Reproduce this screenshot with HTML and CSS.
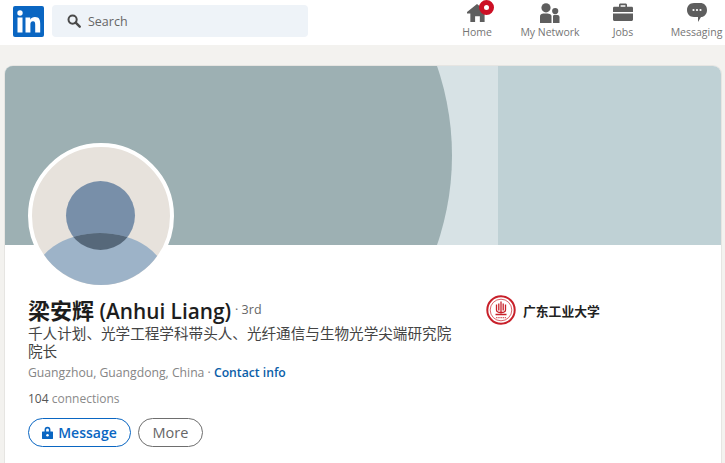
FILE: index.html
```html
<!DOCTYPE html>
<html lang="zh">
<head>
<meta charset="utf-8">
<title>梁安辉 (Anhui Liang)</title>
<link rel="stylesheet" href="styles.css">
</head>
<body>
<header class="nav">
  <svg class="logo" viewBox="0 0 31 31" width="31" height="31">
    <rect width="31" height="31" rx="2" fill="#0a66c2"/>
    <circle cx="7" cy="7" r="2.7" fill="#fff"/>
    <rect x="4.5" y="11.5" width="5" height="15" fill="#fff"/>
    <path d="M12.5 11.5h4.7v2.2c.8-1.4 2.5-2.6 4.8-2.6 4.4 0 5.2 2.9 5.2 6.6v8.8h-5v-7.8c0-1.9-.2-3.5-2.2-3.5-2 0-2.6 1.5-2.6 3.400v7.900h-4.900z" fill="#fff"/>
  </svg>
  <div class="search">
    <svg class="search-icon" viewBox="0 0 14 14" width="14" height="14">
      <circle cx="5.6" cy="5.6" r="4.1" fill="none" stroke="#4a4a4a" stroke-width="2"/>
      <path d="M8.7 8.7l4 4" stroke="#4a4a4a" stroke-width="2.4" stroke-linecap="round"/>
    </svg>
    <span>Search</span>
  </div>
  <nav class="menu">
    <div class="item item-home">
      <span class="icon-wrap">
        <svg viewBox="0 0 21 20" width="20" height="19">
          <path d="M0 9.500L10.500 1 21 9.500V11h-2.500v9h-5v-6h-5v6h-5v-9H0z" fill="#5e5e5e"/>
        </svg>
        <span class="badge"></span>
      </span>
      <span class="label">Home</span>
    </div>
    <div class="item item-net">
      <span class="icon-wrap">
        <svg viewBox="0 0 20 20" width="20" height="20">
          <circle cx="6" cy="4.800" r="4.600" fill="#5e5e5e"/>
          <path d="M0 20v-6.500C0 11 1.800 10.500 6 10.500s5.500 1 5.500 3V20z" fill="#5e5e5e"/>
          <circle cx="15.200" cy="8" r="3.100" fill="#5e5e5e"/>
          <path d="M13 20v-7c0-.6.800-1.200 2.500-1.200 2.700 0 4 .7 4 2.500V20z" fill="#5e5e5e"/>
        </svg>
      </span>
      <span class="label">My Network</span>
    </div>
    <div class="item item-jobs">
      <span class="icon-wrap">
        <svg viewBox="0 0 20 18" width="20" height="18">
          <path d="M6 4V2c0-1 .7-1.500 1.500-1.500h5c.8 0 1.500.5 1.500 1.500v2h-1.600V2.300H7.600V4z" fill="#5e5e5e"/>
          <path d="M0 5.200C0 4.300.7 3.800 1.500 3.800h17c.8 0 1.500.5 1.500 1.400V9H0zM0 10.500h20v6c0 .9-.7 1.500-1.500 1.500h-17C.7 18 0 17.400 0 16.500z" fill="#5e5e5e"/>
        </svg>
      </span>
      <span class="label">Jobs</span>
    </div>
    <div class="item item-msg">
      <span class="icon-wrap">
        <svg class="msg-icon" viewBox="0 0 20 19" width="20" height="19">
          <path d="M7 0h6c4.200 0 7 2.700 7 7s-2.800 7-6 7L11 19v-5H7c-4.200 0-7-2.800-7-7s2.800-7 7-7z" fill="#5e5e5e"/>
          <circle cx="6.500" cy="7" r="1.100" fill="#fff"/>
          <circle cx="10" cy="7" r="1.100" fill="#fff"/>
          <circle cx="13.500" cy="7" r="1.100" fill="#fff"/>
        </svg>
      </span>
      <span class="label">Messaging</span>
    </div>
  </nav>
</header>
<main class="card">
  <div class="banner">
    <div class="banner-light"></div>
    <div class="banner-arc"></div>
  </div>
  <div class="avatar">
    <div class="avatar-head"></div>
    <div class="avatar-body"><div class="avatar-neck"></div></div>
  </div>
  <section class="info">
    <div class="left">
      <h1 class="name-row"><span class="name"><span class="name-cjk">梁安辉</span> (Anhui Liang)</span><span class="degree"> · 3rd</span></h1>
      <p class="headline">千人计划、光学工程学科带头人、光纤通信与生物光学尖端研究院院长</p>
      <p class="location">Guangzhou, Guangdong, China · <a class="contact">Contact info</a></p>
      <p class="connections"><span class="count">104</span> connections</p>
      <div class="actions">
        <button class="btn btn-primary">
          <svg viewBox="0 0 12 14" width="11" height="13">
            <path d="M2.800 6V4a3.200 3.200 0 0 1 6.400 0v2H11.500a.5.5 0 0 1 .5.500v7a.5.5 0 0 1-.5.500H.5a.5.5 0 0 1-.5-.5v-7A.5.5 0 0 1 .5 6zM4.500 6h3V4a1.500 1.500 0 0 0-3 0z" fill="#0a66c2" fill-rule="evenodd"/>
            <circle cx="6" cy="10" r="1.400" fill="#fff"/>
          </svg>
          Message
        </button>
        <button class="btn btn-more">More</button>
      </div>
    </div>
    <div class="school">
      <svg class="seal" viewBox="0 0 30 30" width="30" height="30">
        <circle cx="15" cy="15" r="13.700" fill="#fff" stroke="#c8202a" stroke-width="2"/>
        <circle cx="15" cy="15" r="10.800" fill="none" stroke="#c8202a" stroke-width=".7"/>
        <path d="M15 6.500v12M10.500 9.500v5.500c0 1.500 1.500 2.500 4.500 2.500s4.500-1 4.500-2.500V9.500M12.800 8.500v7M17.200 8.500v7M9.500 19.500h11" fill="none" stroke="#c8202a" stroke-width="1.300"/>
        <path d="M10 22.600h10" stroke="#d9636a" stroke-width="1.200" stroke-dasharray="1.500 .7"/>
      </svg>
      <span class="school-name">广东工业大学</span>
    </div>
  </section>
</main>
</body>
</html>
```
FILE: styles.css
```css
* { box-sizing: border-box; }
html, body { margin: 0; padding: 0; height: 100%; overflow: hidden; }
body {
  background: #f3f2ef;
  font-family: "Open Sans", "Noto Sans", "Noto Sans CJK SC", sans-serif;
  color: #3c3c3c;
}
.nav {
  height: 45px;
  background: #fff;
  display: flex;
  align-items: flex-start;
  padding: 5px 0 0 13px;
}
.logo { flex: none; margin-top: 0.5px; }
.search {
  width: 256px;
  height: 32px;
  margin-left: 8px;
  background: #eef3f8;
  border-radius: 4px;
  display: flex;
  align-items: center;
  padding-left: 15px;
  gap: 7px;
  font-size: 12.500px;
  color: #666;
}
.menu {
  flex: 1;
  height: 40px;
  display: flex;
}
.item {
  display: flex;
  flex-direction: column;
  align-items: center;
  flex: none;
}
.item-home { width: 40px; margin-left: 149px; }
.item-net { width: 64px; margin-left: 21px; }
.item-jobs { width: 30px; margin-left: 26px; }
.item-msg { width: 56px; margin-left: 30.500px; }
.icon-wrap {
  position: relative;
  height: 19px;
  display: flex;
  align-items: flex-start;
  justify-content: center;
  margin-top: -2px;
}
.label {
  margin-top: 3px;
  font-size: 10.500px;
  line-height: 15px;
  white-space: nowrap;
  color: #757575;
}
.badge {
  position: absolute;
  right: -7px;
  top: -3px;
  width: 15px;
  height: 15px;
  border-radius: 50%;
  border: 5.500px solid #cc0f24;
  background: #fff;
}
.card {
  position: relative;
  margin: 21px 4px 0 5px;
  height: 397px;
  background: #fff;
  border-radius: 8px 8px 0 0;
  overflow: hidden;
  box-shadow: 0 0 0 1px rgba(0,0,0,0.05);
}
.banner {
  position: relative;
  height: 179px;
  background: #bfd1d5;
  overflow: hidden;
}
.banner-light {
  position: absolute;
  left: 0;
  top: 0;
  width: 492.500px;
  height: 100%;
  background: #d7e2e5;
}
.banner-arc {
  position: absolute;
  left: -102px;
  top: -185px;
  width: 549px;
  height: 549px;
  border-radius: 50%;
  background: #9db0b3;
}
.avatar {
  position: absolute;
  left: 23px;
  top: 77px;
  width: 146px;
  height: 146px;
  border-radius: 50%;
  border: 4px solid #fff;
  background: #e7e2dc;
  overflow: hidden;
}
.avatar-head {
  position: absolute;
  left: 34px;
  top: 34px;
  width: 69px;
  height: 69px;
  border-radius: 50%;
  background: #788fa9;
}
.avatar-body {
  position: absolute;
  left: 2px;
  top: 86px;
  width: 132px;
  height: 92px;
  border-radius: 50%;
  background: #9db3c8;
  overflow: hidden;
}
.avatar-neck {
  position: absolute;
  left: 32px;
  top: -52px;
  width: 69px;
  height: 69px;
  border-radius: 50%;
  background: #56687a;
}
.info {
  display: flex;
  padding: 52px 0 0 23px;
}
.left { width: 458px; flex: none; }
.name-row {
  margin: 0;
  font-weight: 400;
  display: flex;
  align-items: flex-start;
  height: 27px;
}
.name {
  font-size: 20.800px;
  line-height: 27px;
  font-weight: 600;
  color: #1d1d1d;
}
.name-cjk {
  font-size: 22px;
  font-weight: 700;
}
.degree {
  font-size: 12.500px;
  line-height: 25px;
  color: #666;
  margin-left: 4px;
}
.headline {
  margin: 0;
  width: 428px;
  font-size: 14.600px;
  line-height: 18px;
  color: #444;
}
.location {
  margin: 3px 0 0;
  font-size: 12.200px;
  line-height: 20px;
  color: #858585;
}
.contact { color: #0a5ea8; font-weight: 600; }
.connections {
  margin: 6px 0 0;
  font-size: 12px;
  line-height: 20px;
  color: #8a8a8a;
}
.count { color: #555; }
.actions {
  display: flex;
  gap: 7px;
  margin-top: 9px;
}
.btn {
  height: 29px;
  border-radius: 15px;
  background: #fff;
  font-family: inherit;
  display: flex;
  align-items: center;
  justify-content: center;
  padding: 0;
}
.btn-primary {
  width: 103px;
  gap: 5px;
  font-size: 14px;
  font-weight: 600;
  color: #0a66c2;
  border: 1px solid #0a66c2;
}
.btn-more {
  width: 65px;
  font-size: 14.500px;
  font-weight: 500;
  color: #666;
  border: 1px solid #6e6e6e;
}
.school {
  display: flex;
  align-items: center;
  gap: 7px;
  margin-top: -2px;
  height: 30px;
}
.seal { flex: none; }
.school-name {
  font-size: 12.800px;
  font-weight: 700;
  color: #222;
  font-family: "Noto Sans CJK SC", sans-serif;
}
```
